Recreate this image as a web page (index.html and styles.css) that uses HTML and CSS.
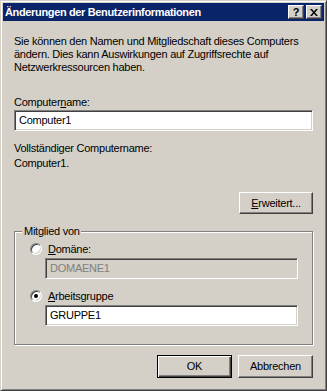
FILE: index.html
```html
<!DOCTYPE html>
<html lang="de">
<head>
  <meta charset="UTF-8" />
  <title>Änderungen der Benutzerinformationen</title>
  <link rel="stylesheet" href="styles.css">
</head>
<body>
  <div class="window">
    <div class="titlebar">
      <span class="title">Änderungen der Benutzerinformationen</span>
      <span class="tbtn help">?</span>
      <span class="tbtn close">
        <svg width="8" height="7" viewBox="0 0 8 7"><path d="M0 0h2l2 2.5 2-2.5h2l-3 3.5 3 3.5h-2l-2-2.5-2 2.5h-2l3-3.5z" fill="#000"/></svg>
      </span>
    </div>
    <div class="content">
      <p class="intro">Sie können den Namen und Mitgliedschaft dieses Computers<br>ändern. Dies kann Auswirkungen auf Zugriffsrechte auf<br>Netzwerkressourcen haben.</p>
      <div class="label name-label">Computer<u>n</u>ame:</div>
      <div class="field wide">Computer1</div>
      <div class="label full-label">Vollständiger Computername:</div>
      <div class="label full-value">Computer1.</div>
      <div class="row right adv-row">
        <div class="btn"><u>E</u>rweitert...</div>
      </div>
      <div class="group">
        <span class="caption">Mitglied von</span>
        <div class="option">
          <span class="radio"></span>
          <span><u>D</u>omäne:</span>
        </div>
        <div class="field sub disabled">DOMAENE1</div>
        <div class="option second">
          <span class="radio checked"></span>
          <span><u>A</u>rbeitsgruppe</span>
        </div>
        <div class="field sub">GRUPPE1</div>
      </div>
      <div class="row right buttons">
        <div class="btn default">OK</div>
        <div class="btn">Abbrechen</div>
      </div>
    </div>
  </div>
</body>
</html>
```

FILE: styles.css
```css
body {
  margin: 0;
  padding: 0;
  font-family: 'Liberation Sans', Arial, sans-serif;
  font-size: 11px;
  letter-spacing: -0.25px;
  color: #000;
  background: #d4d0c8;
}
.window {
  width: 327px;
  height: 391px;
  box-sizing: border-box;
  background: #d4d0c8;
  border: 1px solid;
  border-color: #d4d0c8 #404040 #404040 #d4d0c8;
  box-shadow: inset 1px 1px #fff, inset -1px -1px #808080;
  padding: 2px;
}
.titlebar {
  height: 18px;
  background: #0a246a;
  display: flex;
  align-items: center;
  padding: 0 2px 0 2px;
}
.title {
  flex-grow: 1;
  color: #fff;
  font-weight: bold;
  font-size: 11px;
  letter-spacing: -0.35px;
}
.tbtn {
  width: 16px;
  height: 14px;
  box-sizing: border-box;
  background: #d4d0c8;
  border: 1px solid;
  border-color: #fff #404040 #404040 #fff;
  box-shadow: inset -1px -1px #808080;
  display: flex;
  align-items: center;
  justify-content: center;
  font-weight: bold;
  font-size: 11px;
  letter-spacing: 0;
  line-height: 12px;
}
.help {
  margin-right: 2px;
  padding-bottom: 1px;
}
.close svg {
  display: block;
}
.content {
  padding: 14px 11px 0 11px;
}
.intro {
  margin: 0;
  line-height: 13px;
  white-space: nowrap;
}
.label {
  line-height: 13px;
}
.name-label {
  margin-top: 22px;
}
.field {
  height: 21px;
  box-sizing: border-box;
  background: #fff;
  border: 1px solid;
  border-color: #808080 #fff #fff #808080;
  box-shadow: inset 1px 1px #404040, inset -1px -1px #d4d0c8;
  padding: 3px 0 0 4px;
  line-height: 13px;
}
.wide {
  margin-top: 1px;
  width: 299px;
}
.full-label {
  margin-top: 11px;
}
.full-value {
  margin-top: 2px;
}
.row {
  display: flex;
}
.right {
  justify-content: flex-end;
  gap: 6px;
}
.adv-row {
  margin-top: 22px;
}
.btn {
  width: 74px;
  height: 22px;
  box-sizing: border-box;
  border: 1px solid;
  border-color: #fff #404040 #404040 #fff;
  box-shadow: inset -1px -1px #808080;
  display: flex;
  align-items: center;
  justify-content: center;
  padding-bottom: 1px;
}
.group {
  position: relative;
  margin-top: 17px;
  width: 299px;
  height: 114px;
  box-sizing: border-box;
  border: 1px solid #808080;
  box-shadow: inset 1px 1px #fff, 1px 1px #fff;
  padding: 10px 0 0 15px;
}
.caption {
  position: absolute;
  left: 7px;
  top: -7px;
  padding: 0 1px 0 2px;
  background: #d4d0c8;
  line-height: 13px;
}
.option {
  display: flex;
  align-items: center;
  gap: 6px;
  height: 13px;
}
.second {
  margin-top: 10px;
}
.radio {
  width: 12px;
  height: 12px;
  box-sizing: border-box;
  border-radius: 50%;
  background: #fff;
  border: 1px solid;
  border-color: #808080 #fff #fff #808080;
  box-shadow: inset 1px 1px #404040, inset -1px -1px #d4d0c8;
  position: relative;
}
.checked::after {
  content: '';
  position: absolute;
  left: 3px;
  top: 3px;
  width: 4px;
  height: 4px;
  border-radius: 50%;
  background: #000;
}
.sub {
  width: 253px;
  margin: 3px 0 0 15px;
}
.disabled {
  background: #d4d0c8;
  color: #808080;
}
.buttons {
  margin-top: 10px;
}
.btn.default {
  border: 1px solid #000;
  box-shadow: inset 1px 1px #fff, inset -1px -1px #404040, inset -2px -2px #808080;
}
.buttons .btn {
  height: 23px;
  width: 75px;
}
```
